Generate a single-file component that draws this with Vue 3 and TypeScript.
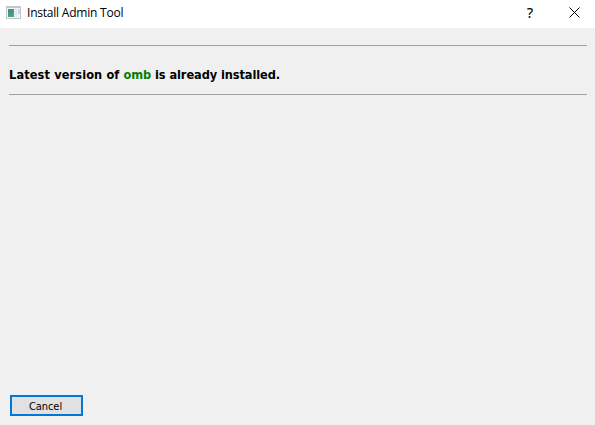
<script setup lang="ts">
const title: string = 'Install Admin Tool'
const packageName: string = 'omb'
</script>

<template>
  <main class="window">
    <header class="titlebar">
      <svg class="app-icon" width="16" height="14" viewBox="0 0 16 14" aria-hidden="true">
        <defs>
          <linearGradient id="pane" x1="0" y1="0" x2="0.5" y2="1">
            <stop offset="0" stop-color="#4d7f9c" />
            <stop offset="1" stop-color="#47a778" />
          </linearGradient>
        </defs>
        <path d="M0 0h15v13H0z" fill="#c4c7c9" />
        <path d="M1 2h13v10H1z" fill="#f3f4f5" />
        <path d="M2 3h6v8H2z" fill="url(#pane)" />
        <path d="M9 3h2v8H9z" fill="#dce5ee" />
        <path d="M12 3h2v5h-2z" fill="#c9d6e3" />
      </svg>
      <h1 class="title">{{ title }}</h1>
      <button class="help" aria-label="Help">?</button>
      <button class="close" aria-label="Close">
        <svg width="11" height="11" viewBox="0 0 11 11">
          <path d="M.5 .5l10 10M10.5 .5l-10 10" fill="none" stroke="#000" stroke-width="1" />
        </svg>
      </button>
    </header>
    <section class="content">
      <p class="message"><span class="lead">Latest version of </span><span class="package">{{ packageName }}</span> is already installed.</p>
      <button class="cancel">Cancel</button>
    </section>
  </main>
</template>

<style>
body {
  margin: 0;
}
</style>

<style scoped>
.window {
  display: flex;
  flex-direction: column;
  height: 100vh;
  overflow: hidden;
  background: #f0f0f0;
  color: #000;
}
button {
  padding: 0;
  border: 0;
  background: transparent;
  color: #000;
}
.titlebar {
  display: flex;
  flex: none;
  align-items: center;
  box-sizing: border-box;
  height: 28px;
  padding: 0 15px 3px 6px;
  background: #fff;
}
.app-icon {
  margin-right: 5px;
}
.title {
  flex: 1;
  margin: 0;
  font: 400 12px/20px "Open Sans", "Noto Sans", sans-serif;
  letter-spacing: -0.22px;
  white-space: nowrap;
}
.help {
  width: 10px;
  margin-right: 34px;
  padding-bottom: 1px;
  font: 400 14px/19px "Open Sans", sans-serif;
  -webkit-text-stroke: 0.2px #000;
}
.close {
  display: flex;
}
.content {
  display: flex;
  flex: 1;
  flex-direction: column;
  align-items: flex-start;
  padding: 17px 8px 9px 9px;
}
.message {
  box-sizing: border-box;
  width: 100%;
  height: 50px;
  margin: 0;
  padding-top: 19px;
  border-top: 1px solid #a0a0a0;
  border-bottom: 1px solid #a0a0a0;
  font: 700 12.67px/20px "DejaVu Sans Condensed", "DejaVu Sans", sans-serif;
  letter-spacing: -0.08px;
  white-space: nowrap;
}
.lead {
  letter-spacing: 0.12px;
}
.package {
  color: #008000;
}
.cancel {
  box-sizing: border-box;
  width: 73px;
  height: 21px;
  margin: auto 0 0 1px;
  padding: 1px 2px 0 0;
  border: 2px solid #0078d7;
  background: #e1e1e1;
  font: 400 11px/17px "DejaVu Sans Condensed", "DejaVu Sans", sans-serif;
  letter-spacing: -0.05px;
}
</style>
